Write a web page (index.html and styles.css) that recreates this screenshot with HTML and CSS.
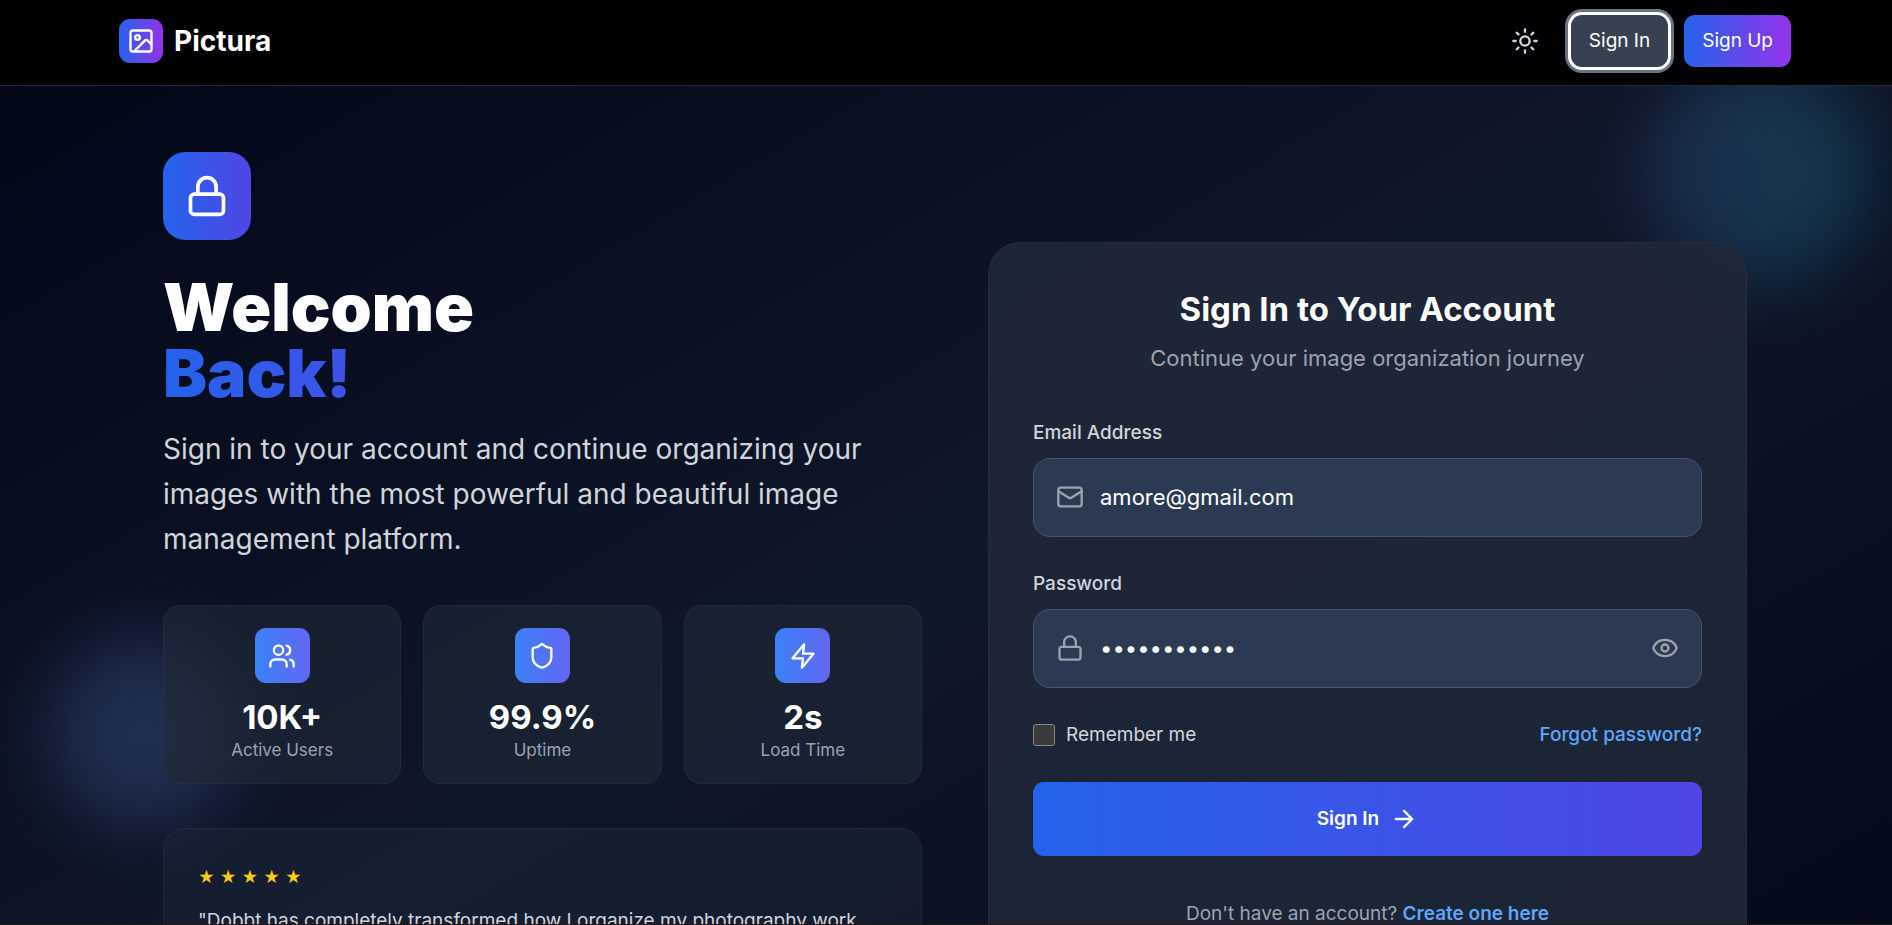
FILE: index.html
```html
<!DOCTYPE html>
<html lang="en">
<head>
<meta charset="utf-8">
<meta name="viewport" content="width=device-width, initial-scale=1">
<title>Pictura – Sign In</title>
<link rel="stylesheet" href="styles.css">
</head>
<body>
<div class="page">
  <header class="header">
    <div class="header-inner">
      <a class="brand" href="#">
        <span class="brand-mark">
          <svg class="icon" viewBox="0 0 24 24"><rect x="3" y="3" width="18" height="18" rx="2"/><circle cx="9" cy="9" r="2"/><path d="m21 15-3.086-3.086a2 2 0 0 0-2.828 0L6 21"/></svg>
        </span>
        <span class="brand-name">Pictura</span>
      </a>
      <nav class="nav">
        <button class="theme-toggle" type="button" aria-label="Toggle theme">
          <svg class="icon" viewBox="0 0 24 24"><circle cx="12" cy="12" r="4"/><path d="M12 2v2M12 20v2M4.93 4.93l1.41 1.41M17.66 17.66l1.41 1.41M2 12h2M20 12h2M6.34 17.66l-1.41 1.41M19.07 4.93l-1.41 1.41"/></svg>
        </button>
        <a class="nav-button nav-button-focus" href="#">Sign In</a>
        <a class="nav-button nav-button-primary" href="#">Sign Up</a>
      </nav>
    </div>
  </header>

  <main class="hero">
    <div class="blob blob-right"></div>
    <div class="blob blob-left"></div>
    <div class="hero-inner">
      <section class="intro">
        <div class="intro-mark">
          <svg class="icon icon-large" viewBox="0 0 24 24"><rect x="3" y="11" width="18" height="11" rx="2"/><path d="M7 11V7a5 5 0 0 1 10 0v4"/></svg>
        </div>
        <h1 class="title">Welcome <span class="title-accent">Back!</span></h1>
        <p class="lead">Sign in to your account and continue organizing your images with the most powerful and beautiful image management platform.</p>
        <div class="stats">
          <div class="stat">
            <span class="stat-mark"><svg class="icon" viewBox="0 0 24 24"><path d="M16 21v-2a4 4 0 0 0-4-4H6a4 4 0 0 0-4 4v2"/><circle cx="9" cy="7" r="4"/><path d="M22 21v-2a4 4 0 0 0-3-3.87M16 3.13a4 4 0 0 1 0 7.75"/></svg></span>
            <span class="stat-value">10K+</span>
            <span class="stat-label">Active Users</span>
          </div>
          <div class="stat">
            <span class="stat-mark"><svg class="icon" viewBox="0 0 24 24"><path d="M20 13c0 5-3.5 7.5-7.66 8.95a1 1 0 0 1-.67-.01C7.5 20.5 4 18 4 13V6a1 1 0 0 1 1-1c2 0 4.5-1.2 6.24-2.72a1.17 1.17 0 0 1 1.52 0C14.51 3.81 17 5 19 5a1 1 0 0 1 1 1z"/></svg></span>
            <span class="stat-value">99.9%</span>
            <span class="stat-label">Uptime</span>
          </div>
          <div class="stat">
            <span class="stat-mark"><svg class="icon" viewBox="0 0 24 24"><path d="M13 2 3 14h9l-1 8 10-12h-9l1-8z"/></svg></span>
            <span class="stat-value">2s</span>
            <span class="stat-label">Load Time</span>
          </div>
        </div>
        <figure class="quote">
          <div class="stars" role="img" aria-label="5 out of 5 stars"><span>★</span><span>★</span><span>★</span><span>★</span><span>★</span></div>
          <blockquote class="quote-text">"Dobbt has completely transformed how I organize my photography work.</blockquote>
        </figure>
      </section>

      <section class="card">
        <h2 class="card-title">Sign In to Your Account</h2>
        <p class="card-subtitle">Continue your image organization journey</p>
        <form class="form">
          <div class="field">
            <label class="label" for="email">Email Address</label>
            <div class="control">
              <svg class="icon" viewBox="0 0 24 24"><rect x="2" y="4" width="20" height="16" rx="2"/><path d="m22 7-8.97 5.7a1.94 1.94 0 0 1-2.06 0L2 7"/></svg>
              <input class="input" id="email" type="email" value="amore@gmail.com">
            </div>
          </div>
          <div class="field">
            <label class="label" for="password">Password</label>
            <div class="control">
              <svg class="icon" viewBox="0 0 24 24"><rect x="3" y="11" width="18" height="11" rx="2"/><path d="M7 11V7a5 5 0 0 1 10 0v4"/></svg>
              <input class="input" id="password" type="password" value="abcdefghijk">
              <button class="reveal" type="button" aria-label="Show password">
                <svg class="icon" viewBox="0 0 24 24"><path d="M2.062 12.348a1 1 0 0 1 0-.696 10.75 10.75 0 0 1 19.876 0 1 1 0 0 1 0 .696 10.75 10.75 0 0 1-19.876 0"/><circle cx="12" cy="12" r="3"/></svg>
              </button>
            </div>
          </div>
          <div class="options">
            <label class="remember" for="remember"><input class="checkbox" id="remember" type="checkbox">Remember me</label>
            <a class="link" href="#">Forgot password?</a>
          </div>
          <button class="submit" type="submit">Sign In
            <svg class="icon" viewBox="0 0 24 24"><path d="M5 12h14M12 5l7 7-7 7"/></svg>
          </button>
        </form>
        <p class="signup">Don't have an account? <a class="link link-strong" href="#">Create one here</a></p>
      </section>
    </div>
  </main>
</div>
</body>
</html>
```
FILE: styles.css
```css
*,
*::before,
*::after {
  box-sizing: border-box;
}

html {
  scrollbar-width: none;
  background: #020617;
}

body {
  margin: 0;
  overflow-x: hidden;
  font-family: Inter, "Liberation Sans", sans-serif;
  font-size: 19px;
  line-height: 28px;
  color: #fff;
}

/* Thin edge along the bottom of the window. */
body::after {
  content: "";
  position: fixed;
  inset: auto 0 0;
  height: 1px;
  background: #1c1a20;
}

h1, h2, p, figure, blockquote {
  margin: 0;
}

a {
  color: inherit;
  text-decoration: none;
}

button {
  padding: 0;
  border: 0;
  background: none;
  font: inherit;
  color: inherit;
}

.page {
  width: calc(100% + 18px);
  background: linear-gradient(to bottom right, #020617, #0f172a, #020617);
}

.icon {
  display: block;
  flex: none;
  width: 28px;
  height: 28px;
  fill: none;
  stroke: currentColor;
  stroke-width: 2;
  stroke-linecap: round;
  stroke-linejoin: round;
}

.icon-large {
  width: 44px;
  height: 44px;
}

/* Header */
.header {
  position: relative;
  z-index: 2;
  padding: 15px 18px 18px;
  border-bottom: 1px solid #1f2937;
  background: #000002;
}

.header-inner {
  display: flex;
  align-items: center;
  justify-content: space-between;
  max-width: 1672px;
  margin: 0 auto;
}

.brand {
  display: flex;
  align-items: center;
  gap: 11px;
}

.brand-mark {
  display: grid;
  place-items: center;
  width: 44px;
  height: 44px;
  border-radius: 11px;
  background: linear-gradient(to right, #2563eb, #9333ea);
}

.brand-name {
  font-size: 28px;
  font-weight: 700;
}

.nav {
  display: flex;
  align-items: center;
  gap: 16px;
}

.theme-toggle {
  display: grid;
  place-items: center;
  width: 60px;
  height: 52px;
  color: #d1d5db;
}

.nav-button {
  padding: 12px 18px;
  border-radius: 11px;
  font-weight: 400;
}

.nav-button-focus {
  background: #374151;
  box-shadow: 0 0 0 3px #fff, 0 0 0 6px #6b7280;
}

.nav-button-primary {
  background: linear-gradient(to right, #2563eb, #9333ea);
}

/* Hero */
.hero {
  position: relative;
  overflow: hidden;
  padding: 66px 18px;
}

.blob {
  position: absolute;
  border-radius: 50%;
  filter: blur(36px);
}

.blob-right {
  top: -22px;
  right: 44px;
  width: 220px;
  height: 220px;
  background: linear-gradient(to right, #4f7cd6, #22d3ee);
  opacity: 0.2;
}

.blob-left {
  top: 550px;
  left: 48px;
  width: 190px;
  height: 190px;
  background: #4b69ac;
  opacity: 0.32;
}

.hero-inner {
  position: relative;
  display: grid;
  grid-template-columns: 1fr 1fr;
  align-items: center;
  gap: 66px;
  max-width: 1584px;
  margin: 0 auto;
}

.intro-mark {
  display: grid;
  place-items: center;
  width: 88px;
  height: 88px;
  margin-bottom: 34px;
  border-radius: 22px;
  background: linear-gradient(to right, #2563eb, #4f46e5);
}

.title {
  width: fit-content;
  max-width: 100%;
  margin-bottom: 21px;
  font-size: 66px;
  font-weight: 900;
  line-height: 66px;
}

.title-accent {
  display: block;
  background: linear-gradient(to right, #2563eb, #4f46e5);
  background-clip: text;
  -webkit-background-clip: text;
  color: transparent;
}

.lead {
  margin-bottom: 43px;
  font-size: 28px;
  line-height: 45px;
  color: #d1d5db;
}

.stats {
  display: grid;
  grid-template-columns: repeat(3, 1fr);
  gap: 22px;
  margin-bottom: 44px;
}

.stat {
  display: flex;
  flex-direction: column;
  align-items: center;
  padding: 22px 22px 20px;
  border: 1px solid rgba(55, 65, 81, 0.3);
  border-radius: 18px;
  background: rgba(31, 41, 55, 0.6);
}

.stat-mark {
  display: grid;
  place-items: center;
  width: 55px;
  height: 55px;
  margin-bottom: 14px;
  border-radius: 11px;
  background: linear-gradient(to right, #3b82f6, #6366f1);
}

.stat-value {
  font-size: 33px;
  font-weight: 700;
  line-height: 40px;
}

.stat-label {
  font-size: 17px;
  line-height: 26px;
  color: #9ca3af;
}

.quote {
  min-height: 234px;
  padding: 34px;
  border: 1px solid rgba(55, 65, 81, 0.3);
  border-radius: 22px;
  background: rgba(31, 41, 60, 0.45);
}

.stars {
  display: flex;
  gap: 5px;
  margin-bottom: 14px;
  font-size: 16px;
  color: #facc15;
}

.quote-text {
  line-height: 31px;
  color: #d1d5db;
}

/* Sign-in card */
.card {
  padding: 44px;
  border: 1px solid rgba(55, 65, 81, 0.3);
  border-radius: 33px;
  background: rgba(30, 39, 56, 0.92);
}

.card-title {
  margin-bottom: 11px;
  text-align: center;
  font-size: 33px;
  font-weight: 700;
  line-height: 44px;
}

.card-subtitle {
  margin-bottom: 44px;
  text-align: center;
  font-size: 22px;
  line-height: 33px;
  color: #9ca3af;
}

.field {
  margin-bottom: 33px;
}

.label {
  display: block;
  margin-bottom: 11px;
  font-weight: 500;
  color: #d1d5db;
}

.control {
  display: flex;
  align-items: center;
  gap: 16px;
  height: 79px;
  padding: 0 22px;
  border: 1px solid #475569;
  border-radius: 17px;
  background: #2c3952;
  color: #9ca3af;
}

.input {
  flex: 1;
  min-width: 0;
  padding: 0;
  border: 0;
  outline: 0;
  background: none;
  font: inherit;
  font-size: 22px;
  color: #fff;
}

.options {
  display: flex;
  align-items: center;
  justify-content: space-between;
  margin-bottom: 33px;
}

.remember {
  display: flex;
  align-items: center;
  gap: 11px;
  color: #d1d5db;
}

.checkbox {
  appearance: none;
  width: 22px;
  height: 22px;
  margin: 0;
  border: 1px solid #858585;
  border-radius: 3px;
  background: #3b3b3b;
}

.link {
  font-weight: 500;
  color: #60a5fa;
}

.link-strong {
  font-weight: 600;
}

.submit {
  display: flex;
  align-items: center;
  justify-content: center;
  gap: 11px;
  width: 100%;
  height: 74px;
  border-radius: 11px;
  background: linear-gradient(to right, #2563eb, #4f46e5);
  font-weight: 600;
}

.signup {
  margin-top: 44px;
  text-align: center;
  color: #9ca3af;
}
```
